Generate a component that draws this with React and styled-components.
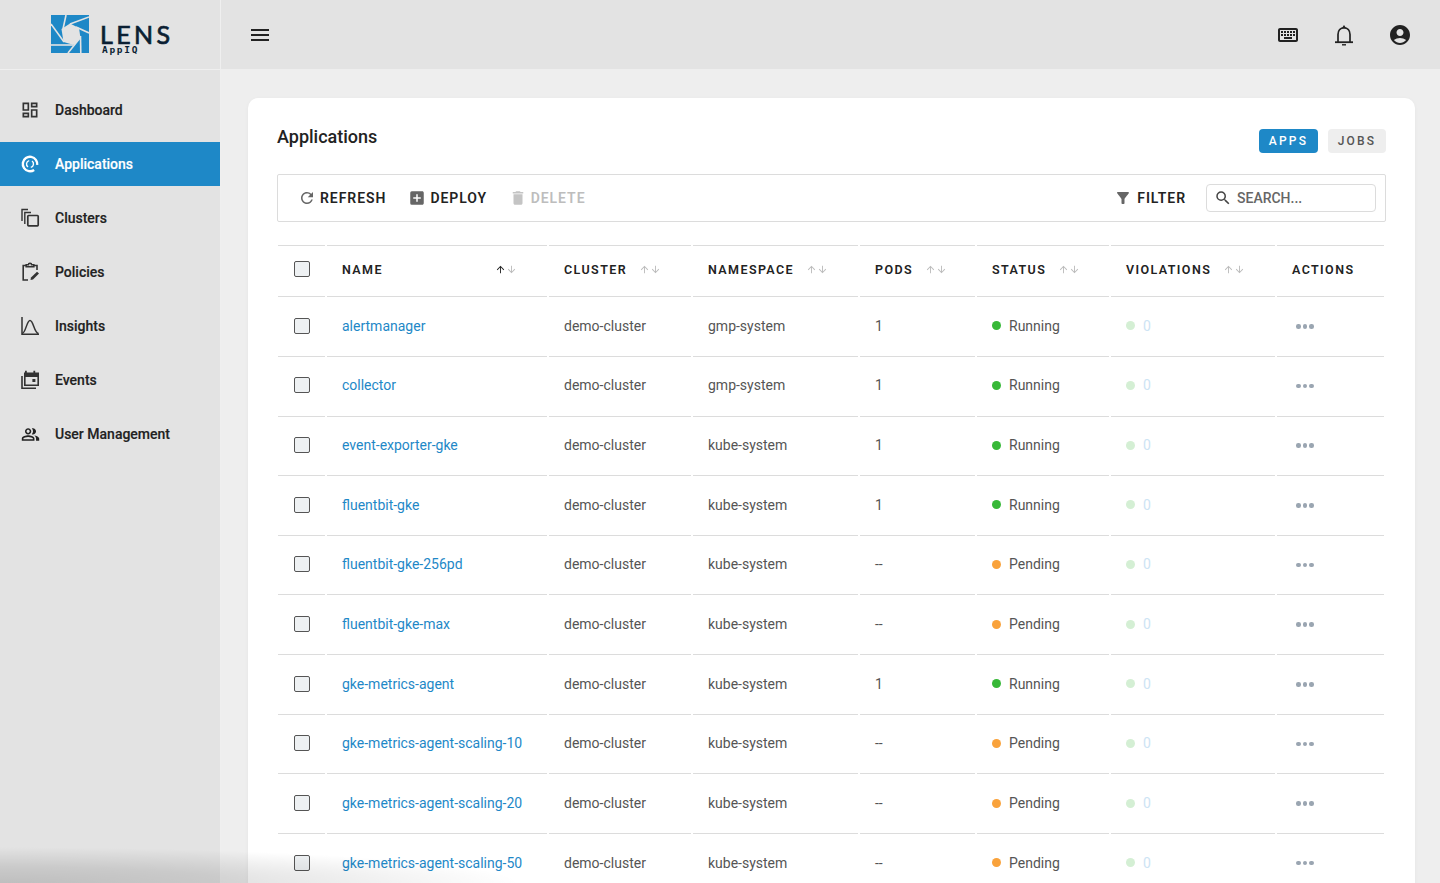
import React from "react";
import styled, { createGlobalStyle } from "styled-components";
import {
  MdMenu, MdOutlineKeyboard, MdAccountCircle, MdOutlineDashboard,
  MdOutlinePeopleAlt, MdRefresh, MdAddBox, MdDelete, MdFilterAlt,
  MdSearch, MdArrowUpward, MdArrowDownward,
} from "react-icons/md";

const Global = createGlobalStyle`
  html, body { margin: 0; padding: 0; height: 100%; overflow: hidden; }
  body { font-family: Roboto, "Liberation Sans", sans-serif; background: #eeeeee; color: #222; }
  * { box-sizing: border-box; }
`;

const Page = styled.div`
  display: flex;
  height: 883px;
  overflow: hidden;
  position: relative;
`;
const Sidebar = styled.aside`
  width: 221px;
  flex: none;
  background: #e3e3e3;
  border-right: 1px solid #efefef;
`;
const Brand = styled.div`
  height: 70px;
  border-bottom: 1px solid #efefef;
  display: flex;
  align-items: center;
  padding: 0 0 1px 51px;
  gap: 11px;
`;
const BrandText = styled.div`
  display: flex;
  flex-direction: column;
  color: #0b1f33;
  padding-top: 9px;
`;
const BrandName = styled.span`
  font-family: Lato, Roboto, sans-serif;
  font-size: 25px;
  line-height: 22px;
  font-weight: 400;
  letter-spacing: 3.4px;
  -webkit-text-stroke: 0.7px #0b1f33;
`;
const BrandSub = styled.span`
  font-family: "DejaVu Sans Mono", monospace;
  font-size: 9.5px;
  line-height: 10px;
  font-weight: 700;
  letter-spacing: 1.7px;
  padding-left: 2px;
`;
const Nav = styled.nav`
  display: flex;
  flex-direction: column;
  gap: 10px;
  padding-top: 18px;
`;
const NavItem = styled.a`
  height: 44px;
  display: flex;
  align-items: center;
  gap: 15px;
  padding-left: 20px;
  font-size: 14px;
  font-weight: 500;
  -webkit-text-stroke: 0.15px currentColor;
  color: ${(p) => (p.$active ? "#fff" : "#222")};
  background: ${(p) => (p.$active ? "#1e88c7" : "transparent")};
  svg { width: 20px; height: 20px; flex: none; }
`;
const PeopleIcon = styled(MdOutlinePeopleAlt)`
  && { width: 19px; height: 19px; margin: 0 0.5px; color: #222; }
`;
const Main = styled.main`
  flex: 1;
  min-width: 0;
  display: flex;
  flex-direction: column;
`;
const TopBar = styled.header`
  height: 69px;
  flex: none;
  background: #e3e3e3;
  display: flex;
  align-items: center;
  justify-content: space-between;
  padding: 0 28px 0 27px;
  color: #222;
`;
const TopIcons = styled.div`
  display: flex;
  align-items: center;
  gap: 32px;
  svg { display: block; }
`;
const Content = styled.div`
  padding: 29px 25px 0 27px;
`;
const Card = styled.section`
  background: #fff;
  border-radius: 10px;
  padding: 29px 29px 0;
  height: 860px;
  box-shadow: 0 1px 4px rgba(0, 0, 0, 0.04);
`;
const CardHead = styled.div`
  display: flex;
  justify-content: space-between;
  align-items: flex-start;
  height: 47px;
`;
const Title = styled.h1`
  margin: 0;
  font-size: 18px;
  line-height: 19px;
  font-weight: 500;
  color: #222;
`;
const Tabs = styled.div`
  display: flex;
  gap: 10px;
  padding-top: 2px;
`;
const Tab = styled.button`
  height: 24px;
  width: ${(p) => (p.$active ? "59px" : "58px")};
  border: 0;
  padding: 0;
  border-radius: 4px;
  font: 500 12px Roboto, sans-serif;
  letter-spacing: 2.2px;
  color: ${(p) => (p.$active ? "#fff" : "#555")};
  background: ${(p) => (p.$active ? "#1e88c7" : "#eeeeee")};
`;
const Toolbar = styled.div`
  height: 48px;
  border: 1px solid #dcdcdc;
  border-radius: 2px;
  display: flex;
  align-items: center;
  padding: 0 9px 0 20px;
`;
const Action = styled.span`
  display: flex;
  align-items: center;
  gap: ${(p) => p.$iconGap || 4}px;
  margin-right: ${(p) => p.$gap || 0}px;
  font-size: 14px;
  font-weight: 600;
  letter-spacing: 0.95px;
  color: ${(p) => (p.$disabled ? "#bdbdbd" : "#222")};
  svg { width: 18px; height: 18px; color: ${(p) => (p.$disabled ? "#c4c4c4" : "#666")}; }
`;
const Spacer = styled.div`
  flex: 1;
`;
const Search = styled.div`
  width: 170px;
  height: 28px;
  border: 1px solid #dcdcdc;
  border-radius: 4px;
  margin-left: 20px;
  display: flex;
  align-items: center;
  gap: 5px;
  padding-left: 7px;
  font-size: 14px;
  font-weight: 500;
  color: #666;
  svg { width: 18px; height: 18px; color: #444; }
`;
const Table = styled.div`
  margin: 23px 2px 0 1px;
`;
const Row = styled.div`
  display: grid;
  grid-template-columns: 47px 220px 142px 165px 115px 132px 164px 107px;
  column-gap: 2px;
  height: ${(p) => (p.$head ? "52.2px" : "59.67px")};
`;
const Cell = styled.div`
  display: flex;
  align-items: center;
  padding: 0 0 1.4px 15px;
  font-size: 14px;
  color: #555;
  border-bottom: 1px solid #dcdcdc;
  white-space: nowrap;
`;
const HeadCell = styled(Cell)`
  border-top: 1px solid #dcdcdc;
  padding-bottom: 4px;
  font-size: 12.5px;
  font-weight: 600;
  letter-spacing: 1.4px;
  color: #222;
`;
const Check = styled.span`
  width: 16px;
  height: 16px;
  margin-left: 1px;
  border: 1px solid #555;
  border-radius: 2px;
  background: #eef1f3;
  flex: none;
`;
const Sort = styled.span`
  display: inline-flex;
  margin-left: ${(p) => (p.$push ? "auto" : "12px")};
  margin-right: ${(p) => (p.$push ? "30px" : "0")};
  color: #bbb;
  svg { width: 11px; height: 11px; display: block; }
  svg:first-child { color: ${(p) => (p.$active ? "#222" : "#bbb")}; }
`;
const AppLink = styled.a`
  color: #1e88c7;
`;
const Dot = styled.span`
  width: 9px;
  height: 9px;
  border-radius: 50%;
  margin-right: 8px;
  background: ${(p) => p.$color};
  flex: none;
`;
const Zero = styled.span`
  color: #cde4f4;
`;
const More = styled.span`
  display: flex;
  gap: 2px;
  margin-left: 4px;
  margin-top: 1px;
`;
const MoreDot = styled.i`
  width: 4.5px;
  height: 4.5px;
  border-radius: 50%;
  background: #9aa5b1;
`;
const Fade = styled.div`
  position: absolute;
  left: 0;
  right: 0;
  bottom: 0;
  height: 40px;
  pointer-events: none;
  background: radial-gradient(ellipse 520px 36px at 0 100%, rgba(0,0,0,0.16), rgba(0,0,0,0.11) 45%, rgba(0,0,0,0) 100%);
`;

const Logo = () => (
  <svg width="38" height="38" viewBox="0 0 38 38">
    <rect width="38" height="38" fill="#1e88c7" />
    <g stroke="#e3e3e3" strokeWidth="1.6" fill="none">
      <path d="M15 0 L12 14" />
      <path d="M38 2 L19 9" />
      <path d="M38 18 L25 12" />
      <path d="M17 38 L29 23" />
      <path d="M0 30 L22 30" />
      <path d="M0 9 L13 27" />
      <path d="M29.5 21 L29.8 38" />
    </g>
    <path d="M19 8.5 L28 13 L29.5 23 L23 30 L12.5 27 L10.5 14 Z" fill="#e3e3e3" />
  </svg>
);
const BellOutline = () => (
  <svg width="24" height="24" viewBox="0 0 24 24" fill="none" stroke="#222">
    <path d="M3 19.2 H21" strokeWidth="1.8" />
    <path d="M6 19 V11.5 C6 7.5 8.5 4.8 12 4.8 C15.5 4.8 18 7.5 18 11.5 V19" strokeWidth="1.7" />
    <path d="M12 2 L14 5 H10 Z" fill="#222" stroke="none" />
    <path d="M10 21.8 H14" strokeWidth="1.4" />
  </svg>
);
const AppsIcon = () => (
  <svg viewBox="0 0 20 20" fill="none" stroke="#fff">
    <circle cx="10" cy="10" r="7.2" strokeWidth="2.4" strokeDasharray="39 6" transform="rotate(55 10 10)" />
    <path d="M8 13 A3.6 3.6 0 0 1 9.2 6.6" strokeWidth="1.4" />
    <path d="M12 7 A3.6 3.6 0 0 1 10.8 13.4" strokeWidth="1.4" />
  </svg>
);
const ClustersIcon = () => (
  <svg viewBox="0 0 20 20" fill="none" stroke="#333" strokeWidth="1.4">
    <path d="M8 1.5 H2 V13" />
    <path d="M11 4.5 H4.8 V16" />
    <rect x="7.8" y="7.5" width="10.4" height="10.4" rx="0.8" strokeWidth="1.7" />
  </svg>
);
const PoliciesIcon = () => (
  <svg viewBox="0 0 20 20" fill="none" stroke="#333" strokeWidth="1.6">
    <path d="M6 3.5 H3.2 V18 H8 M14 3.5 H17 V8" />
    <path d="M6.2 4.8 V2.8 H8.4 A1.6 1.6 0 0 1 11.6 2.8 H13.8 V4.8 Z" />
    <path d="M10.5 18 L11 15.6 L17 9.8 L19 11.6 L13 17.6 Z" fill="#333" stroke="none" />
  </svg>
);
const InsightsIcon = () => (
  <svg viewBox="0 0 20 20" fill="none" stroke="#333" strokeWidth="1.5">
    <path d="M2 1 V18.2 H19" />
    <path d="M2 17.6 C6 17, 6.5 4.5, 10 4.5 C13.5 4.5, 14 17, 18.5 17.6" />
  </svg>
);
const EventsIcon = () => (
  <svg viewBox="0 0 20 20">
    <path d="M1.2 6 V19 H16 V17.4 H2.8 V6 Z" fill="#333" />
    <path fillRule="evenodd" d="M5 0.8 H6.8 V2.4 H13.4 V0.8 H15.2 V2.4 H19 V16 H4 V2.4 H5 Z M5.6 7 V14.4 H17.4 V7 Z" fill="#333" />
    <rect x="12.4" y="9" width="3" height="3" fill="#333" />
  </svg>
);

const navItems = [
  ["Dashboard", <MdOutlineDashboard key="i" color="#333" />],
  ["Applications", <AppsIcon key="i" />, true],
  ["Clusters", <ClustersIcon key="i" />],
  ["Policies", <PoliciesIcon key="i" />],
  ["Insights", <InsightsIcon key="i" />],
  ["Events", <EventsIcon key="i" />],
  ["User Management", <PeopleIcon key="i" />],
];

const columns = [
  ["NAME", true, true],
  ["CLUSTER"],
  ["NAMESPACE"],
  ["PODS"],
  ["STATUS"],
  ["VIOLATIONS"],
];

const rows = [
  ["alertmanager", "gmp-system", "1", "Running"],
  ["collector", "gmp-system", "1", "Running"],
  ["event-exporter-gke", "kube-system", "1", "Running"],
  ["fluentbit-gke", "kube-system", "1", "Running"],
  ["fluentbit-gke-256pd", "kube-system", "--", "Pending"],
  ["fluentbit-gke-max", "kube-system", "--", "Pending"],
  ["gke-metrics-agent", "kube-system", "1", "Running"],
  ["gke-metrics-agent-scaling-10", "kube-system", "--", "Pending"],
  ["gke-metrics-agent-scaling-20", "kube-system", "--", "Pending"],
  ["gke-metrics-agent-scaling-50", "kube-system", "--", "Pending"],
];

export default function App() {
  return (
    <Page>
      <Global />
      <Sidebar>
        <Brand>
          <Logo />
          <BrandText>
            <BrandName>LENS</BrandName>
            <BrandSub>AppIQ</BrandSub>
          </BrandText>
        </Brand>
        <Nav>
          {navItems.map(([label, icon, active]) => (
            <NavItem key={label} $active={active}>
              {icon}
              {label}
            </NavItem>
          ))}
        </Nav>
      </Sidebar>
      <Main>
        <TopBar>
          <MdMenu size={24} />
          <TopIcons>
            <MdOutlineKeyboard size={24} />
            <BellOutline />
            <MdAccountCircle size={24} />
          </TopIcons>
        </TopBar>
        <Content>
          <Card>
            <CardHead>
              <Title>Applications</Title>
              <Tabs>
                <Tab $active>APPS</Tab>
                <Tab>JOBS</Tab>
              </Tabs>
            </CardHead>
            <Toolbar>
              <Action $gap={22}><MdRefresh />REFRESH</Action>
              <Action $gap={21.5}><MdAddBox />DEPLOY</Action>
              <Action $disabled><MdDelete />DELETE</Action>
              <Spacer />
              <Action $iconGap={5}><MdFilterAlt />FILTER</Action>
              <Search><MdSearch />SEARCH...</Search>
            </Toolbar>
            <Table>
              <Row $head>
                <HeadCell><Check /></HeadCell>
                {columns.map(([label, push, active]) => (
                  <HeadCell key={label}>
                    {label}
                    <Sort $push={push} $active={active}>
                      <MdArrowUpward />
                      <MdArrowDownward />
                    </Sort>
                  </HeadCell>
                ))}
                <HeadCell>ACTIONS</HeadCell>
              </Row>
              {rows.map(([name, ns, pods, status]) => (
                <Row key={name}>
                  <Cell><Check /></Cell>
                  <Cell><AppLink>{name}</AppLink></Cell>
                  <Cell>demo-cluster</Cell>
                  <Cell>{ns}</Cell>
                  <Cell>{pods}</Cell>
                  <Cell>
                    <Dot $color={status === "Running" ? "#37b837" : "#f9a23b"} />
                    {status}
                  </Cell>
                  <Cell>
                    <Dot $color="#d4efd4" />
                    <Zero>0</Zero>
                  </Cell>
                  <Cell>
                    <More><MoreDot /><MoreDot /><MoreDot /></More>
                  </Cell>
                </Row>
              ))}
            </Table>
          </Card>
        </Content>
      </Main>
      <Fade />
    </Page>
  );
}
